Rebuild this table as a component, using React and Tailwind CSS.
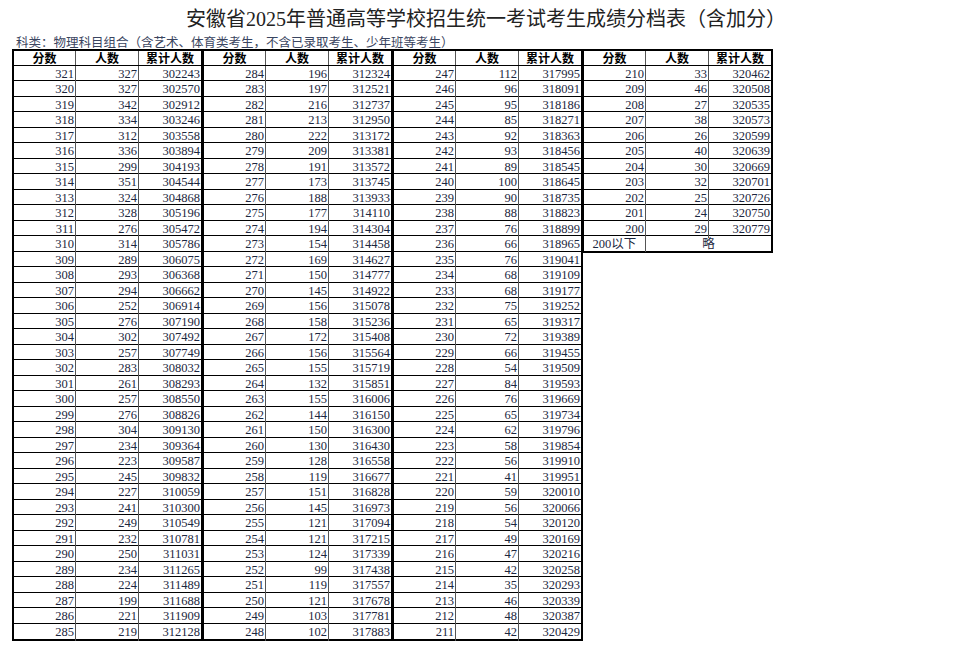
import React from 'react';

// 每分人数，从321分到200分
const counts = [
    327, 327, 342, 334, 312, 336, 299, 351, 324, 328, 276, 314, 289, 293, 294, 252, 276, 302, 257,
    283, 261, 257, 276, 304, 234, 223, 245, 227, 241, 249, 232, 250, 234, 224, 199, 221, 219,
    196, 197, 216, 213, 222, 209, 191, 173, 188, 177, 194, 154, 169, 150, 145, 156, 158, 172, 156,
    155, 132, 155, 144, 150, 130, 128, 119, 151, 145, 121, 121, 124, 99, 119, 121, 103, 102,
    112, 96, 95, 85, 92, 93, 89, 100, 90, 88, 76, 66, 76, 68, 68, 75, 65, 72, 66, 54, 84, 76, 65,
    62, 58, 56, 41, 59, 56, 54, 49, 47, 42, 35, 46, 48, 42,
    33, 46, 27, 38, 26, 40, 30, 32, 25, 24, 29,
];

let total = 301916;
const rows = counts.map((c, i) => {
    total += c;
    return [321 - i, c, total];
});

const blocks = [rows.slice(0, 37), rows.slice(37, 74), rows.slice(74, 111), rows.slice(111)];

const font = { fontFamily: '"Liberation Serif", "Noto Sans CJK SC", serif' };

const Header = () => (
    <div className="grid grid-cols-[62px_63px_62px] h-[14.5px] border-b border-black">
        {['分数', '人数', '累计人数'].map((t, i) => (
            <div
                key={t}
                className={`text-center text-[12px] leading-[14px] font-bold text-black ${i < 2 ? 'border-r border-[#555]' : ''}`}
                style={{ fontFamily: '"Noto Sans CJK SC", sans-serif' }}
            >
                {t}
            </div>
        ))}
    </div>
);

const Block = ({ data, last, first }) => (
    <div className={`w-[191px] border-2 border-black ${first ? '' : '-ml-[1px]'}`}>
        <Header />
        {data.map((r, idx) => (
            <div
                key={r[0]}
                className={`grid grid-cols-[62px_63px_62px] h-[15.5px] ${idx < data.length - 1 || last ? 'border-b border-black' : ''}`}
            >
                <div className="border-r border-[#555] text-right pr-[1px] text-[12.5px] leading-[17px] text-[#1c2740]">{r[0]}</div>
                <div className="border-r border-[#555] text-right pr-[1px] text-[12.5px] leading-[17px] text-[#1c2740]">{r[1]}</div>
                <div className="text-right pr-[1px] text-[12.5px] leading-[17px] text-[#1c2740]">{r[2]}</div>
            </div>
        ))}
        {last && (
            <div className="grid grid-cols-[62px_125px] h-[15px]">
                <div className="border-r border-[#555] text-center text-[12.5px] leading-[16px] text-[#1c2740]">200以下</div>
                <div className="text-center text-[12.5px] leading-[16px] text-[#1c2740]">略</div>
            </div>
        )}
    </div>
);

export default function App() {
    return (
        <div className="w-[972px] h-[651px] bg-white overflow-hidden" style={font}>
            <div className="h-[36px] pt-[6px] text-center text-[20px] leading-[27px] text-[#222]">
                安徽省2025年普通高等学校招生统一考试考生成绩分档表（含加分）
            </div>
            <div className="h-[13px] pl-[16px] text-[12.5px] leading-[15px] text-[#3a4560] whitespace-nowrap">
                科类：物理科目组合（含艺术、体育类考生，不含已录取考生、少年班等考生）
            </div>
            <div className="flex items-start ml-[12px]">
                {blocks.map((b, i) => (
                    <Block key={i} data={b} first={i === 0} last={i === 3} />
                ))}
            </div>
        </div>
    );
}
